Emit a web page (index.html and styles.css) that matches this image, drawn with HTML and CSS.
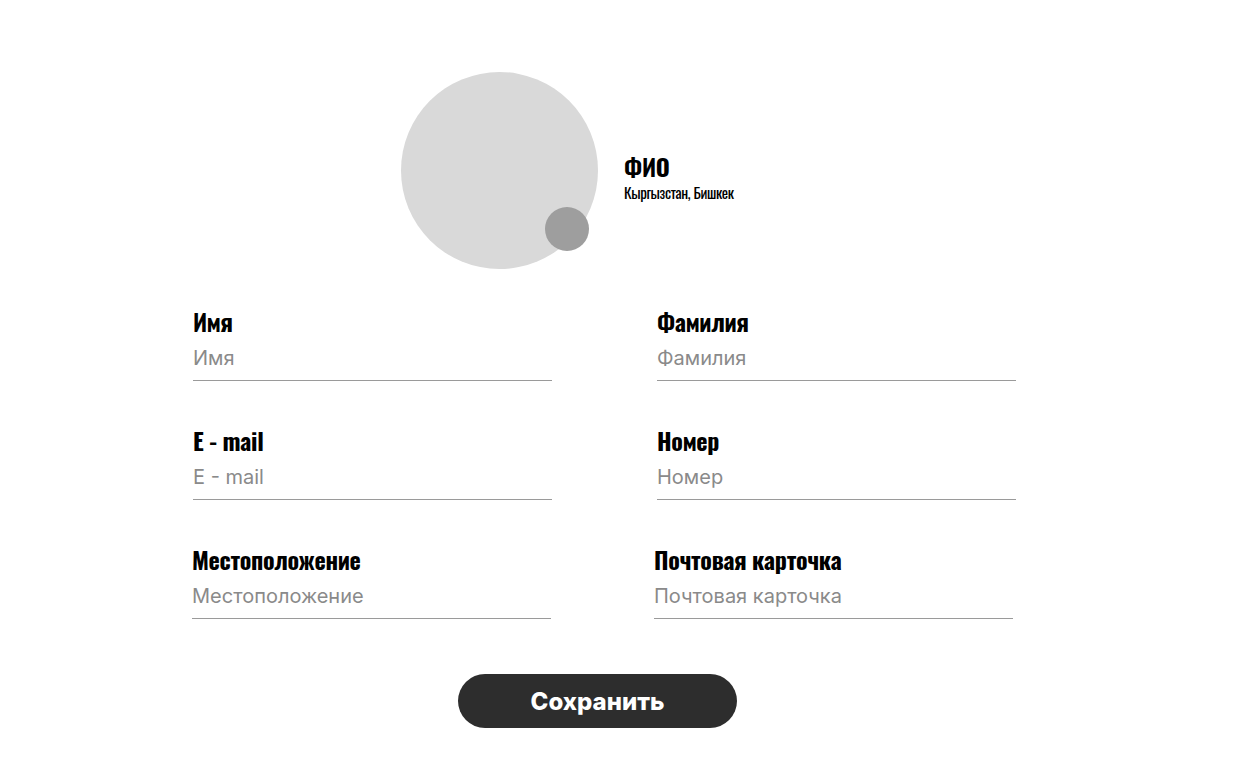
FILE: index.html
```html
<!DOCTYPE html>
<html lang="ru">
<head>
<meta charset="utf-8">
<title>Профиль</title>
<link rel="stylesheet" href="styles.css">
</head>
<body>
<main class="page">
  <section class="profile">
    <div class="avatar">
      <span class="avatar-badge"></span>
    </div>
    <div class="profile-info">
      <h1 class="profile-name">ФИО</h1>
      <p class="profile-place">Кыргызстан, Бишкек</p>
    </div>
  </section>

  <form class="form">
    <div class="field">
      <label class="field-label" for="f-name">Имя</label>
      <input class="field-input" id="f-name" type="text" placeholder="Имя">
    </div>
    <div class="field">
      <label class="field-label" for="f-surname">Фамилия</label>
      <input class="field-input" id="f-surname" type="text" placeholder="Фамилия">
    </div>
    <div class="field">
      <label class="field-label" for="f-email">E - mail</label>
      <input class="field-input" id="f-email" type="text" placeholder="E - mail">
    </div>
    <div class="field">
      <label class="field-label" for="f-phone">Номер</label>
      <input class="field-input" id="f-phone" type="text" placeholder="Номер">
    </div>
    <div class="field field-shift-sm">
      <label class="field-label" for="f-loc">Местоположение</label>
      <input class="field-input" id="f-loc" type="text" placeholder="Местоположение">
    </div>
    <div class="field field-shift-lg">
      <label class="field-label" for="f-post">Почтовая карточка</label>
      <input class="field-input" id="f-post" type="text" placeholder="Почтовая карточка">
    </div>
  </form>

  <div class="actions">
    <button class="save-btn" type="button">Сохранить</button>
  </div>
</main>
</body>
</html>
```
FILE: styles.css
```css
* { box-sizing: border-box; }

html, body {
  margin: 0;
  padding: 0;
  background: #ffffff;
}

body {
  font-family: "Inter", "Liberation Sans", sans-serif;
  color: #000;
}

.page {
  width: 1244px;
  padding: 72px 0 0 193px;
}

.profile {
  display: flex;
  align-items: center;
  gap: 26px;
  padding-left: 208px;
}

.avatar {
  position: relative;
  width: 197px;
  height: 197px;
  border-radius: 50%;
  background: #d9d9d9;
  flex: none;
}

.avatar-badge {
  position: absolute;
  left: 144px;
  top: 135px;
  width: 44px;
  height: 44px;
  border-radius: 50%;
  background: #9e9e9e;
}

.profile-info {
  margin-top: 13px;
}

.profile-name {
  margin: 0;
  font-family: "Oswald", "Liberation Sans Narrow", "DejaVu Sans Condensed", sans-serif;
  font-weight: 700;
  font-size: 24px;
  line-height: 28px;
  letter-spacing: -0.3px;
}

.profile-place {
  margin: 2px 0 0;
  font-family: "Oswald", "Liberation Sans Narrow", "DejaVu Sans Condensed", sans-serif;
  font-weight: 400;
  font-size: 15px;
  line-height: 20px;
  letter-spacing: -0.35px;
}

.form {
  display: grid;
  grid-template-columns: 359px 359px;
  column-gap: 105px;
  row-gap: 44px;
  margin-top: 37px;
}

.field {
  display: flex;
  flex-direction: column;
}

.field-label {
  font-family: "Oswald", "Liberation Sans Narrow", "DejaVu Sans Condensed", sans-serif;
  font-weight: 700;
  font-size: 24px;
  line-height: 30px;
  letter-spacing: -0.3px;
}

.field-input {
  margin-top: 2px;
  width: 100%;
  height: 43px;
  padding: 0 0 2px 0;
  border: none;
  border-bottom: 1px solid #9a9a9a;
  border-radius: 0;
  outline: none;
  background: transparent;
  font-family: "Inter", "Liberation Sans", sans-serif;
  font-size: 20px;
  color: #333;
}

.field-input::placeholder {
  color: #8a8a8a;
}

.field-shift-sm { margin-left: -1px; margin-right: 1px; }
.field-shift-lg { margin-left: -3px; margin-right: 3px; }

.actions {
  padding-left: 265px;
  margin-top: 55px;
}

.save-btn {
  width: 279px;
  height: 54px;
  border: none;
  border-radius: 27px;
  background: #2d2d2d;
  color: #fff;
  font-family: "Inter", "Liberation Sans", sans-serif;
  font-weight: 800;
  font-size: 24px;
  cursor: pointer;
}
```
